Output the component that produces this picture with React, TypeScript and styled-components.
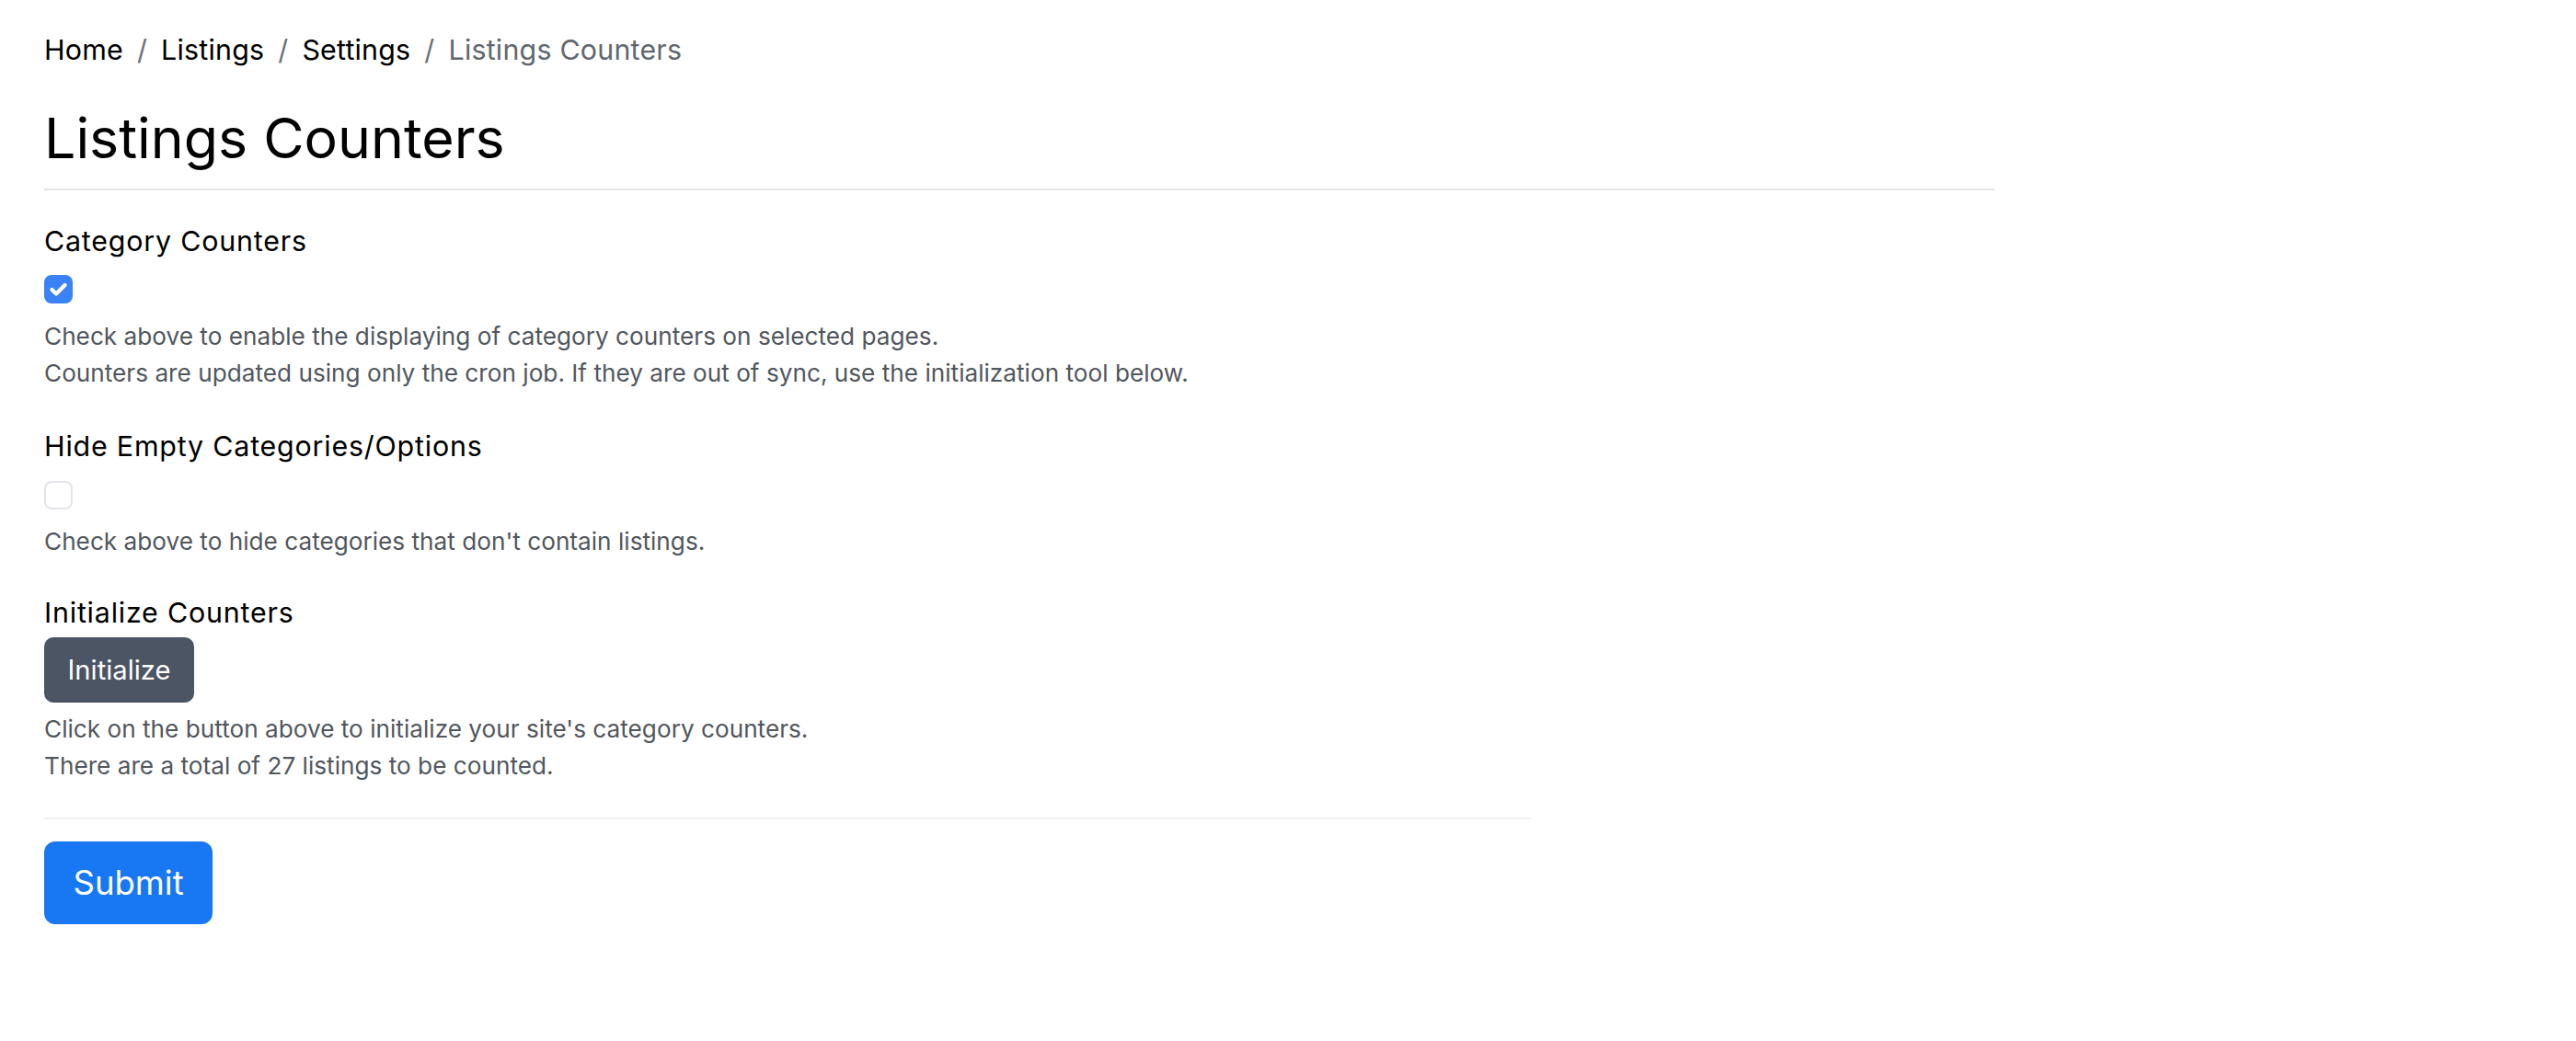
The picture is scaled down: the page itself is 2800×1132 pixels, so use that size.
import React from 'react';
import styled, { createGlobalStyle } from 'styled-components';

const CRUMBS = ['Home', 'Listings', 'Settings'] as const;

const GlobalStyle = createGlobalStyle`
  html, body {
    margin: 0;
    padding: 0;
    background: #fff;
  }
  body {
    font-family: Inter, Lato, 'Open Sans', sans-serif;
    color: #000;
  }
  * {
    box-sizing: border-box;
  }
`;

const Page = styled.main`
  padding: 32px 0 40px 48px;
`;

const Crumbs = styled.ol`
  display: flex;
  align-items: baseline;
  margin: 0;
  padding: 0;
  list-style: none;
  font-size: 30.4px;
  line-height: 45.6px;
  letter-spacing: 0.2px;
`;

const Crumb = styled.li<{ $active?: boolean }>`
  color: ${({ $active }) => ($active ? '#62676e' : '#000')};

  &:not(:first-child)::before {
    content: '/';
    padding: 0 15px;
    color: #6c7077;
  }
`;

const PageHeader = styled.div`
  width: 2120px;
  margin-top: 36px;
  padding-bottom: 18px;
  border-bottom: 2px solid #e3e3e3;
`;

const Title = styled.h1`
  margin: 0;
  font-size: 60.8px;
  line-height: 73px;
  font-weight: 400;
`;

const Section = styled.section<{ $gap: number }>`
  margin-top: ${({ $gap }) => $gap}px;
`;

const Label = styled.label`
  display: block;
  font-size: 30.4px;
  line-height: 45.6px;
  letter-spacing: 0.8px;
`;

const Box = styled.span<{ $checked?: boolean }>`
  display: flex;
  align-items: center;
  justify-content: center;
  width: 31px;
  height: 31px;
  margin-top: 14px;
  border-radius: 8px;
  border: 2px solid ${({ $checked }) => ($checked ? '#3b82f6' : '#e2e5ea')};
  background: ${({ $checked }) => ($checked ? '#3b82f6' : '#fff')};
`;

const Help = styled.p<{ $top: number }>`
  margin: ${({ $top }) => $top}px 0 0;
  font-size: 26.2px;
  line-height: 40px;
  color: #52575e;
`;

const SecondaryButton = styled.button`
  display: block;
  margin-top: 4px;
  padding: 12.7px 25.5px;
  border: none;
  border-radius: 10px;
  background: #4b5563;
  color: #fff;
  font-family: inherit;
  font-size: 29.2px;
  line-height: 45.6px;
  cursor: pointer;
`;

const Divider = styled.hr`
  width: 1616px;
  margin: 36px 0 0;
  border: none;
  border-top: 2px solid #f2f2f2;
`;

const SubmitButton = styled.button`
  display: block;
  margin-top: 24px;
  padding: 16.5px 31.5px;
  border: none;
  border-radius: 12px;
  background: #1877f2;
  color: #fff;
  font-family: inherit;
  font-size: 36.5px;
  line-height: 57px;
  cursor: pointer;
`;

const Check: React.FC<{ checked?: boolean }> = ({ checked }) => (
  <Box $checked={checked} role="checkbox" aria-checked={!!checked}>
    {checked && (
      <svg width="27" height="27" viewBox="0 0 20 20" aria-hidden="true">
        <path
          d="M4.8 10.4l3.4 3.3 7-7"
          fill="none"
          stroke="#fff"
          strokeWidth="3.2"
          strokeLinecap="round"
          strokeLinejoin="round"
        />
      </svg>
    )}
  </Box>
);

const App: React.FC = () => (
  <>
    <GlobalStyle />
    <Page>
      <nav aria-label="breadcrumb">
        <Crumbs>
          {CRUMBS.map((name) => (
            <Crumb key={name}>{name}</Crumb>
          ))}
          <Crumb $active>Listings Counters</Crumb>
        </Crumbs>
      </nav>
      <PageHeader>
        <Title>Listings Counters</Title>
      </PageHeader>

      <form onSubmit={(e) => e.preventDefault()}>
        <Section $gap={33}>
          <Label>Category Counters</Label>
          <Check checked />
          <Help $top={16}>
            Check above to enable the displaying of category counters on selected pages.
            <br />
            Counters are updated using only the cron job. If they are out of sync, use the
            initialization tool below.
          </Help>
        </Section>

        <Section $gap={37}>
          <Label>Hide Empty Categories/Options</Label>
          <Check />
          <Help $top={15}>Check above to hide categories that don't contain listings.</Help>
        </Section>

        <Section $gap={35}>
          <Label>Initialize Counters</Label>
          <SecondaryButton type="button">Initialize</SecondaryButton>
          <Help $top={9}>
            Click on the button above to initialize your site's category counters.
            <br />
            There are a total of 27 listings to be counted.
          </Help>
        </Section>

        <Divider />
        <SubmitButton type="submit">Submit</SubmitButton>
      </form>
    </Page>
  </>
);

export default App;
